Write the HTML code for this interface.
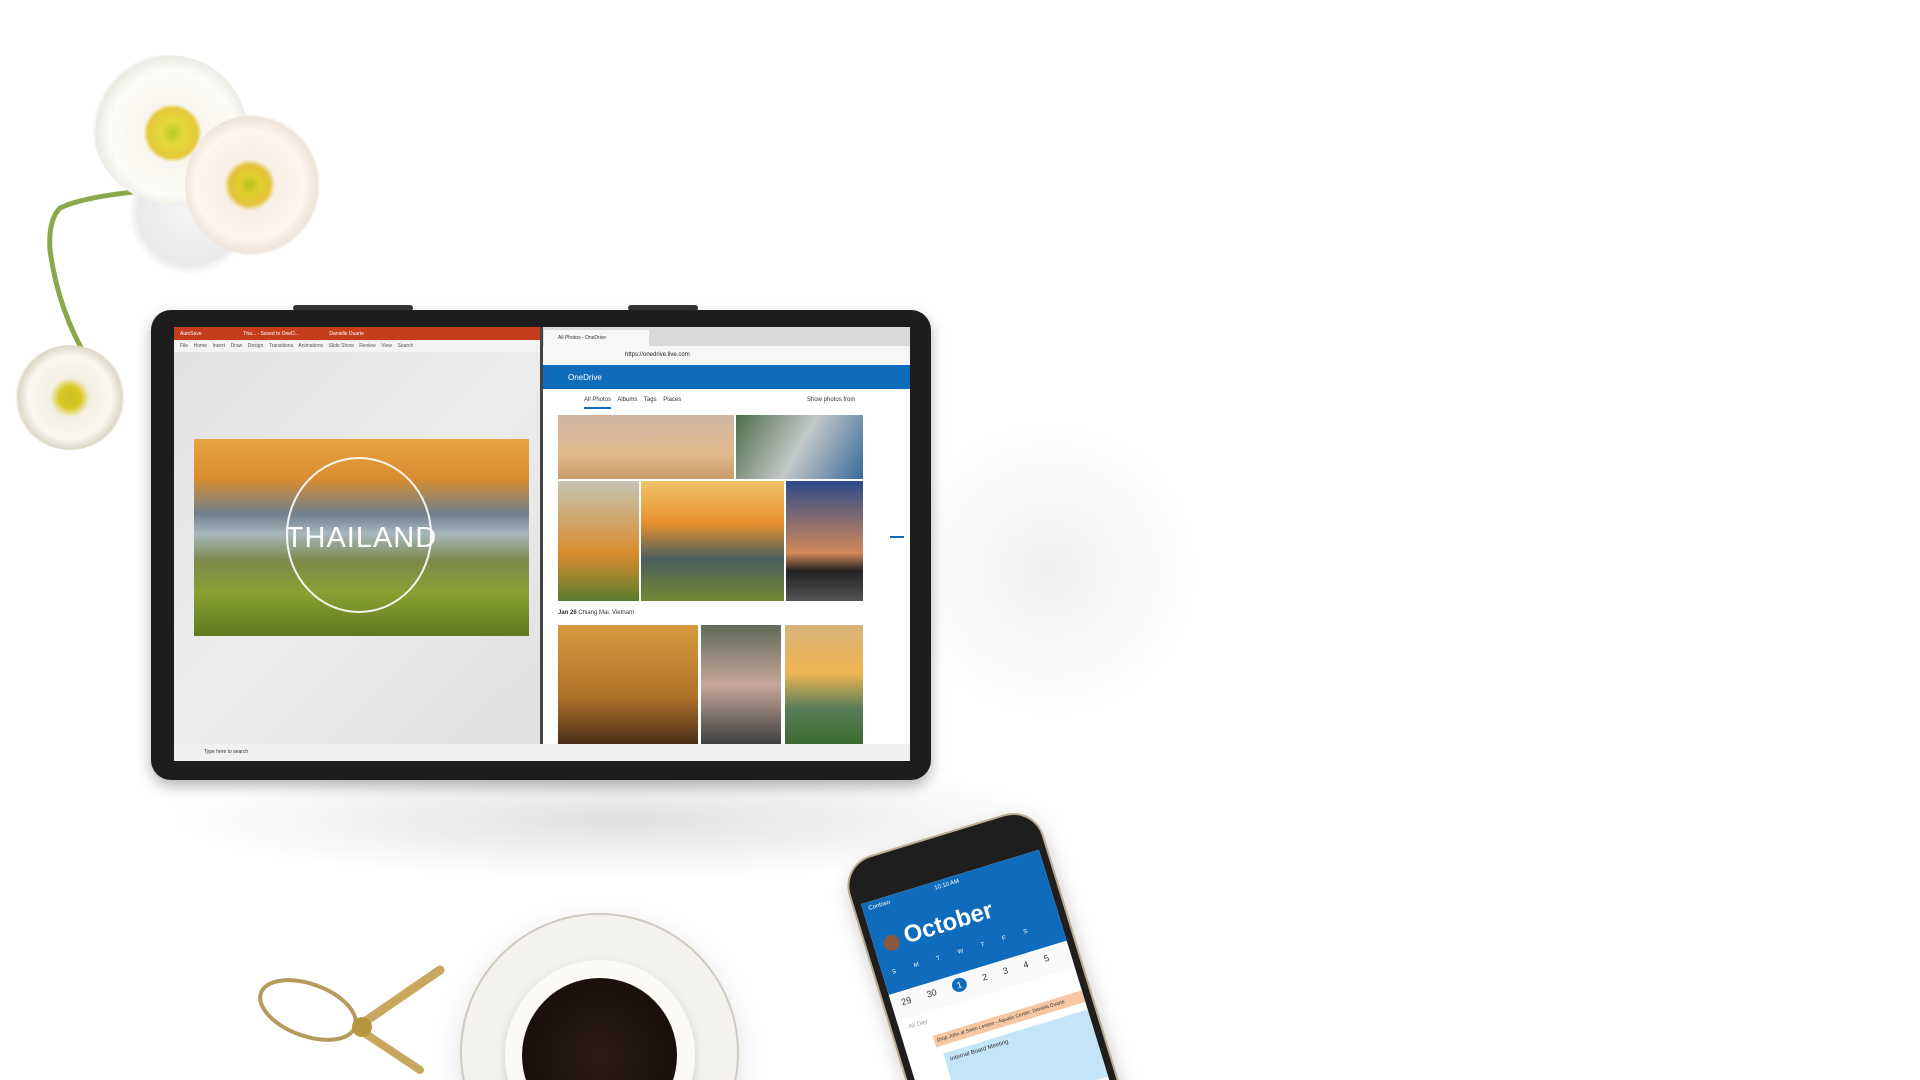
<!DOCTYPE html>
<html><head><meta charset="utf-8"><style>
*{margin:0;padding:0;box-sizing:border-box}
html,body{width:1920px;height:1080px;overflow:hidden}
body{background:#fff;font-family:"Liberation Sans",sans-serif}
#w{position:relative;width:1920px;height:1080px;overflow:hidden;background:#fff}
.a{position:absolute}
</style></head><body><div id="w">
<div class="a" style="left:170px;top:760px;width:900px;height:120px;border-radius:50%;background:radial-gradient(ellipse,rgba(0,0,0,.12),rgba(0,0,0,0) 70%)"></div>
<div class="a" style="left:900px;top:420px;width:300px;height:300px;border-radius:50%;background:radial-gradient(ellipse,rgba(0,0,0,.06),rgba(0,0,0,0) 70%)"></div>
<div class="a" style="left:130px;top:150px;width:120px;height:125px;border-radius:50%;background:radial-gradient(circle,#f6f6f6,#e9e9e9 60%,rgba(255,255,255,0) 72%)"></div>
<svg class="a" style="left:0;top:0" width="400" height="460"><path d="M133 192 Q80 198 60 208 Q48 220 50 250 Q58 310 88 360" stroke="#8aa84a" stroke-width="5" fill="none"/></svg>
<div class="a" style="left:92px;top:55px;width:155px;height:150px;border-radius:48% 52% 45% 55%;background:radial-gradient(circle at 52% 52%,#b8c820 0,#e2d83a 10%,#e6c83a 22%,#f7f5ec 26%,#fdfcf8 55%,#ecebe4 68%,rgba(255,255,255,0) 72%)"></div>
<div class="a" style="left:185px;top:115px;width:135px;height:140px;border-radius:50%;background:radial-gradient(circle at 48% 50%,#b8c020 0,#dfcf2a 10%,#e4c23a 20%,#f8efe6 26%,#fcf6f0 55%,#eee4da 68%,rgba(255,255,255,0) 72%)"></div>
<div class="a" style="left:15px;top:345px;width:110px;height:105px;border-radius:50%;background:radial-gradient(circle,#c8c028 0,#d8c820 14%,#f3efe2 26%,#f9f7f0 55%,#ddd8c8 68%,rgba(255,255,255,0) 72%)"></div>
<div class="a" style="left:293px;top:305px;width:120px;height:6px;background:#333;border-radius:3px"></div>
<div class="a" style="left:628px;top:305px;width:70px;height:6px;background:#333;border-radius:3px"></div>
<div class="a" style="left:151px;top:310px;width:780px;height:470px;border-radius:20px;background:#1d1d1f;box-shadow:0 6px 14px rgba(0,0,0,.3)"></div>
<div class="a" style="left:174px;top:327px;width:736px;height:434px;background:#e6e6e6;overflow:hidden;font-size:5px">
  <div class="a" style="left:0;top:0;width:366px;height:13px;background:#c43e1c;color:#fff;padding:4px 6px;white-space:nowrap">AutoSave &nbsp;&nbsp;&nbsp;&nbsp;&nbsp;&nbsp;&nbsp;&nbsp;&nbsp;&nbsp;&nbsp;&nbsp;&nbsp;&nbsp;&nbsp;&nbsp;&nbsp;&nbsp;&nbsp;&nbsp;&nbsp;&nbsp;&nbsp;&nbsp;&nbsp;&nbsp;&nbsp;&nbsp; Tha... - Saved to OneD... &nbsp;&nbsp;&nbsp;&nbsp;&nbsp;&nbsp;&nbsp;&nbsp;&nbsp;&nbsp;&nbsp;&nbsp;&nbsp;&nbsp;&nbsp;&nbsp;&nbsp;&nbsp;&nbsp;&nbsp; Danielle Duarte</div>
  <div class="a" style="left:0;top:13px;width:366px;height:12px;background:#f3f3f3;color:#555;padding:3px 6px;white-space:nowrap">File &nbsp;&nbsp; Home &nbsp;&nbsp; Insert &nbsp;&nbsp; Draw &nbsp;&nbsp; Design &nbsp;&nbsp; Transitions &nbsp;&nbsp; Animations &nbsp;&nbsp; Slide Show &nbsp;&nbsp; Review &nbsp;&nbsp; View &nbsp;&nbsp; Search</div>
  <div class="a" style="left:0;top:25px;width:366px;height:392px;background:linear-gradient(135deg,#e2e2e2,#ececec 50%,#e0e0e0)"></div>
  <div class="a" style="left:20px;top:112px;width:335px;height:197px;background:linear-gradient(180deg,#e7a343 0%,#d98d30 20%,#6f7f8e 38%,#a6b7bd 48%,#7d8a4a 62%,#8aa033 78%,#5f7a1e 100%)"></div>
  <div class="a" style="left:112px;top:130px;width:146px;height:156px;border:2px solid rgba(255,255,255,.9);border-radius:50%"></div>
  <div class="a" style="left:20px;top:195px;width:335px;text-align:center;color:#fff;font-size:29px;letter-spacing:1px">THAILAND</div>
  <div class="a" style="left:0;top:417px;width:736px;height:17px;background:#f0f0f0;color:#333;padding:5px 30px">Type here to search</div>
  <div class="a" style="left:366px;top:0;width:3px;height:417px;background:#444"></div>
  <div class="a" style="left:369px;top:0;width:367px;height:19px;background:#d9d9d9"></div>
  <div class="a" style="left:370px;top:3px;width:105px;height:16px;background:#f7f7f7;padding:5px 14px;color:#333">All Photos - OneDrive</div>
  <div class="a" style="left:369px;top:19px;width:367px;height:19px;background:#f7f7f7;font-size:6px;color:#222;padding:6px 82px">https://onedrive.live.com</div>
  <div class="a" style="left:369px;top:38px;width:367px;height:24px;background:#0f6cbd;color:#fff;font-size:8px;padding:8px 25px">OneDrive</div>
  <div class="a" style="left:369px;top:62px;width:367px;height:355px;background:#fff"></div>
  <div class="a" style="left:410px;top:70px;font-size:6px;color:#333;white-space:nowrap">All Photos &nbsp;&nbsp; Albums &nbsp;&nbsp; Tags &nbsp;&nbsp; Places</div>
  <div class="a" style="left:633px;top:70px;font-size:6px;color:#333">Show photos from</div>
  <div class="a" style="left:410px;top:80px;width:27px;height:2px;background:#0f6cbd"></div>
  <div class="a" style="left:384px;top:88px;width:176px;height:64px;background:linear-gradient(180deg,#cfb6a6,#e3b98b 60%,#c99c6a)"></div>
  <div class="a" style="left:562px;top:88px;width:127px;height:64px;background:linear-gradient(120deg,#4c6d48,#c3c8c8 50%,#3a6a9a)"></div>
  <div class="a" style="left:384px;top:154px;width:81px;height:120px;background:linear-gradient(180deg,#c5c4b3,#d98c2e 60%,#5b7d2e)"></div>
  <div class="a" style="left:467px;top:154px;width:143px;height:120px;background:linear-gradient(180deg,#f0c468,#e7902e 35%,#4a5e5e 65%,#718a33)"></div>
  <div class="a" style="left:612px;top:154px;width:77px;height:120px;background:linear-gradient(180deg,#2d4a8a,#d2885a 60%,#222 75%,#555)"></div>
  <div class="a" style="left:384px;top:283px;font-size:6px;color:#333"><b>Jan 26</b> Chiang Mai, Vietnam</div>
  <div class="a" style="left:384px;top:298px;width:140px;height:119px;background:linear-gradient(180deg,#d99b3e,#b0712a 60%,#4a3018)"></div>
  <div class="a" style="left:527px;top:298px;width:80px;height:119px;background:linear-gradient(180deg,#5f6a5a,#c7a69a 50%,#3d4040)"></div>
  <div class="a" style="left:611px;top:298px;width:78px;height:119px;background:linear-gradient(180deg,#d8b37a,#f0b652 40%,#5a7d5a 70%,#3b6b2e)"></div>
  <div class="a" style="left:716px;top:209px;width:14px;height:2px;background:#0f6cbd"></div>
</div>
<svg class="a" style="left:250px;top:960px" width="210" height="120"><ellipse cx="58" cy="50" rx="50" ry="26" transform="rotate(20 58 50)" stroke="#b59a5c" stroke-width="4" fill="none"/><path d="M110 65 L190 10" stroke="#c7a85e" stroke-width="9" stroke-linecap="round"/><path d="M110 70 L170 110" stroke="#c7a85e" stroke-width="8" stroke-linecap="round"/><circle cx="112" cy="67" r="10" fill="#b8963e"/></svg>
<div class="a" style="left:462px;top:915px;width:275px;height:275px;border-radius:50%;background:#f4f2ee;box-shadow:0 0 0 2px #cfc9bf,0 10px 30px rgba(0,0,0,.15)"></div>
<div class="a" style="left:505px;top:960px;width:190px;height:190px;border-radius:50%;background:#fbfaf7;box-shadow:0 4px 10px rgba(0,0,0,.15)"></div>
<div class="a" style="left:522px;top:978px;width:155px;height:155px;border-radius:50%;background:radial-gradient(circle,#2a1a14,#1c100c 70%,#4a3428)"></div>
<div class="a" style="left:842px;top:866px;width:200px;height:420px;transform-origin:0 0;transform:rotate(-17deg);background:#1e1e1e;border-radius:30px;padding:42px 7px 10px;box-shadow:0 0 0 2px #b9aa90,0 8px 20px rgba(0,0,0,.25)">
  <div style="width:100%;height:100%;background:#fff;overflow:hidden;position:relative;font-size:8px;color:#333">
    <div style="height:95px;background:#0f6cbd;color:#fff;position:relative">
      <div class="a" style="left:6px;top:4px;font-size:6px">Contoso</div>
      <div class="a" style="left:75px;top:4px;font-size:6px">10:10 AM</div>
      <div class="a" style="left:10px;top:38px;width:16px;height:16px;border-radius:50%;background:#8a5a40"></div>
      <div class="a" style="left:32px;top:30px;font-size:24px;font-weight:bold">October</div>
      <div class="a" style="left:10px;top:72px;font-size:6px;word-spacing:17px;white-space:nowrap">S M T W T F S</div>
    </div>
    <div style="padding:6px 10px;font-size:9px;word-spacing:14px;white-space:nowrap;height:28px;background:#fafafa">29 30 <span style="background:#0f6cbd;color:#fff;border-radius:50%;padding:2px 5px">1</span> 2 3 4 5</div>
    <div style="padding:6px 10px;font-size:6px;color:#999">All Day</div>
    <div style="margin:6px 0 0 30px;height:12px;background:#f6c7a2;font-size:5px;padding:3px;white-space:nowrap;overflow:hidden">Drop John at Swim Lesson - Aquatic Center; Daniela Duarte</div>
    <div style="margin:8px 0 0 35px;height:70px;background:#c4e4f8;font-size:6px;padding:5px">Internal Board Meeting</div>
    <div style="margin:8px 0 0 35px;height:45px;background:#cce8c8"></div>
  </div>
</div>
</div></body></html>
